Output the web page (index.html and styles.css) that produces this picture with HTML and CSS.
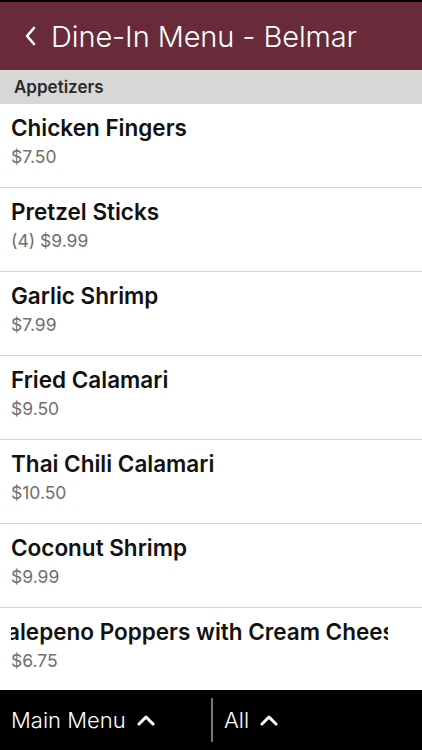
FILE: index.html
```html
<!DOCTYPE html>
<html lang="en">
<head>
    <meta charset="UTF-8">
    <meta name="viewport" content="width=device-width, initial-scale=1.0">
    <title>Dine-In Menu - Belmar</title>
    <link rel="stylesheet" href="styles.css">
</head>
<body>
    <div class="app">
        <header class="topbar">
            <svg class="back" width="14" height="22" viewBox="0 0 14 22">
                <path d="M11 3 L4 11 L11 19" fill="none" stroke="#fff" stroke-width="2.6" stroke-linecap="round" stroke-linejoin="round"/>
            </svg>
            <h1>Dine-In Menu - Belmar</h1>
        </header>

        <div class="section-title">Appetizers</div>

        <ul class="menu">
            <li class="item">
                <div class="item-name">Chicken Fingers</div>
                <div class="item-price">$7.50</div>
            </li>
            <li class="item">
                <div class="item-name">Pretzel Sticks</div>
                <div class="item-price">(4) $9.99</div>
            </li>
            <li class="item">
                <div class="item-name">Garlic Shrimp</div>
                <div class="item-price">$7.99</div>
            </li>
            <li class="item">
                <div class="item-name">Fried Calamari</div>
                <div class="item-price">$9.50</div>
            </li>
            <li class="item">
                <div class="item-name">Thai Chili Calamari</div>
                <div class="item-price">$10.50</div>
            </li>
            <li class="item">
                <div class="item-name">Coconut Shrimp</div>
                <div class="item-price">$9.99</div>
            </li>
            <li class="item">
                <div class="item-name clipped"><span>Jalepeno Poppers with Cream Cheese</span></div>
                <div class="item-price">$6.75</div>
            </li>
        </ul>

        <footer class="bottombar">
            <div class="tab tab-main">
                Main Menu
                <svg class="caret" width="20" height="12" viewBox="0 0 20 12">
                    <path d="M3 10 L10 3 L17 10" fill="none" stroke="#fff" stroke-width="3" stroke-linecap="round" stroke-linejoin="round"/>
                </svg>
            </div>
            <div class="divider"></div>
            <div class="tab">
                All
                <svg class="caret" width="20" height="12" viewBox="0 0 20 12">
                    <path d="M3 10 L10 3 L17 10" fill="none" stroke="#fff" stroke-width="3" stroke-linecap="round" stroke-linejoin="round"/>
                </svg>
            </div>
        </footer>
    </div>
</body>
</html>
```

FILE: styles.css
```css
body {
    margin: 0;
    font-family: "Inter", "Liberation Sans", sans-serif;
    background: #fff;
}

.app {
    width: 422px;
    height: 750px;
    display: flex;
    flex-direction: column;
    overflow: hidden;
}

/* Header */
.topbar {
    height: 68px;
    border-top: 2px solid #000;
    background: #692b3a;
    display: flex;
    align-items: center;
    padding-left: 23px;
    gap: 14px;
    color: #fff;
    flex-shrink: 0;
}

.topbar h1 {
    margin: 0;
    font-size: 29px;
    font-weight: 300;
    letter-spacing: -0.1px;
}

.section-title {
    height: 34px;
    background: #d7d7d7;
    display: flex;
    align-items: center;
    padding-left: 14px;
    font-size: 17px;
    font-weight: 600;
    color: #2a2a2a;
    flex-shrink: 0;
}

/* Items */
.menu {
    list-style: none;
    margin: 0;
    padding: 0;
    flex: 1;
    overflow: hidden;
}

.item {
    height: 84px;
    border-bottom: 1px solid #d5d5d5;
    padding: 10px 0 0 11px;
    box-sizing: border-box;
}

.item-name {
    font-size: 22.5px;
    font-weight: 600;
    color: #111;
    line-height: 28px;
}

.item-price {
    margin-top: 3px;
    font-size: 17.5px;
    color: #6e6e6e;
    line-height: 24px;
}

.clipped {
    width: 377px;
    overflow: hidden;
    white-space: nowrap;
}

.clipped span {
    display: inline-block;
    margin-left: -17px;
}

/* Footer */
.bottombar {
    height: 60px;
    background: #000;
    display: flex;
    align-items: center;
    color: #fff;
    font-size: 22px;
    font-weight: 300;
    flex-shrink: 0;
}

.tab {
    display: flex;
    align-items: center;
    gap: 10px;
    padding-left: 11px;
}

.tab-main {
    width: 200px;
}

.divider {
    width: 2px;
    height: 44px;
    background: #777;
}
```
